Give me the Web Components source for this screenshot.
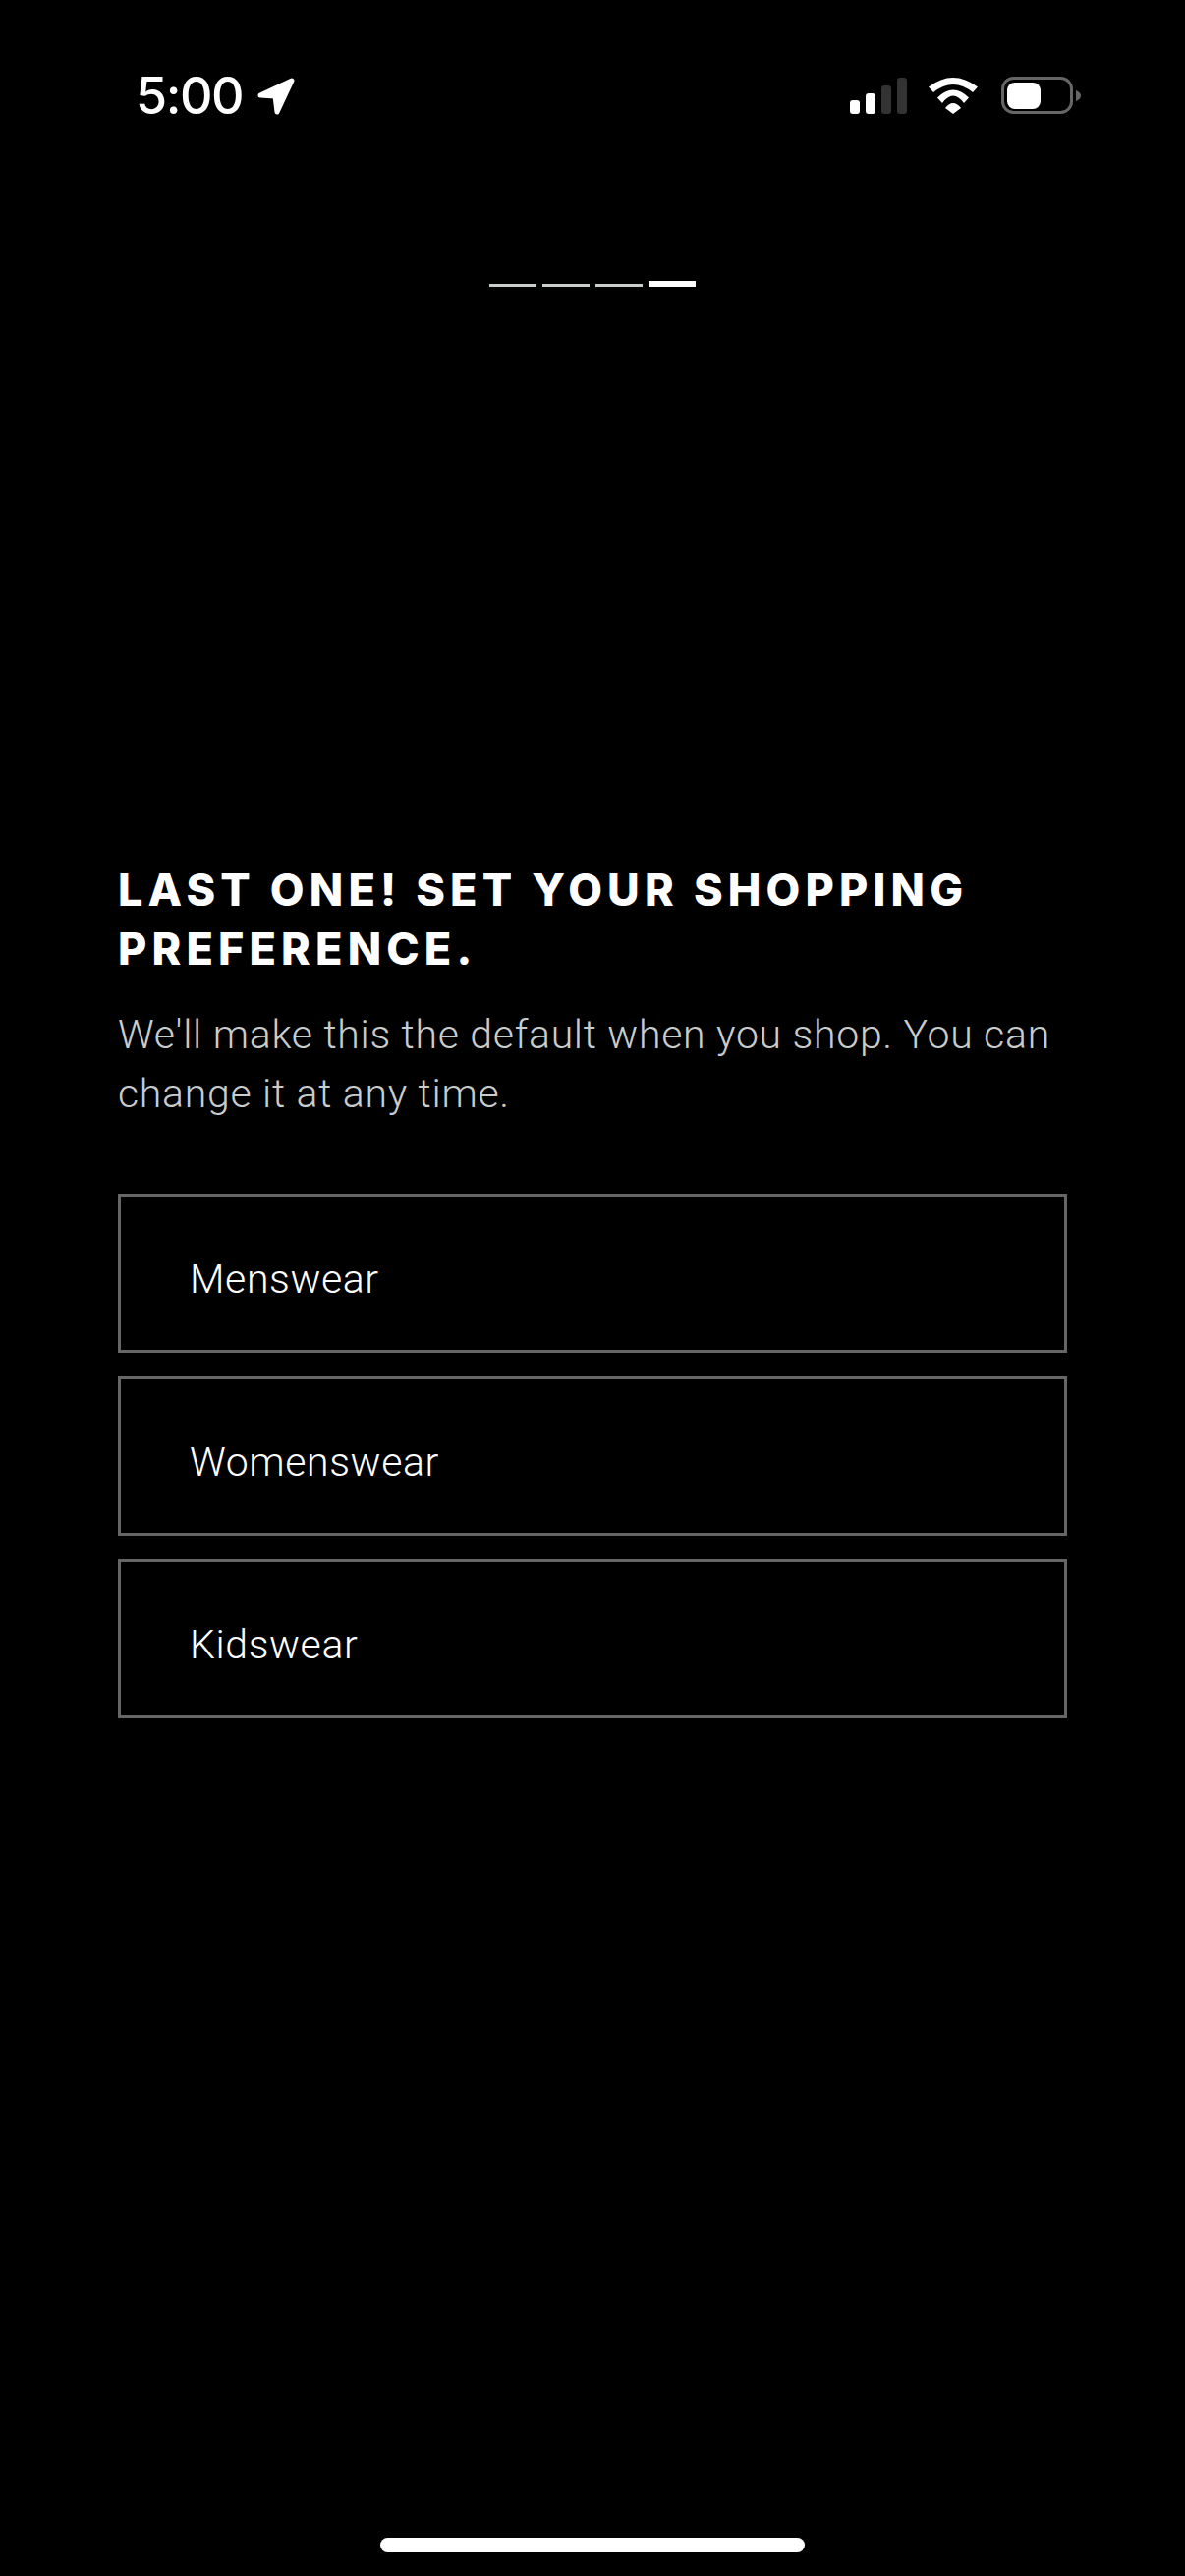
<!DOCTYPE html>
<html>
<head>
<meta charset="utf-8">
<title>Shopping preference</title>
<style>
  html, body { margin: 0; background: #000; }
</style>
</head>
<body>
<pref-screen>
  <status-bar time="5:00"></status-bar>
  <step-progress steps="4" current="4"></step-progress>
  <pref-intro>
    <span slot="title">Last one! Set your shopping preference.</span>
    We'll make this the default when you shop. You can change it at any time.
  </pref-intro>
  <pref-options>
    <pref-option>Menswear</pref-option>
    <pref-option>Womenswear</pref-option>
    <pref-option>Kidswear</pref-option>
  </pref-options>
  <home-bar></home-bar>
</pref-screen>

<script>
(function () {
    class PrefScreen extends HTMLElement {
        constructor() {
            super();
            this.attachShadow({ mode: 'open' }).innerHTML = `
              <style>
                :host {
                    display: flex;
                    flex-direction: column;
                    box-sizing: border-box;
                    width: 1206px;
                    height: 2622px;
                    background: #000;
                    color: #fff;
                    overflow: hidden;
                }
              </style>
              <slot></slot>`;
        }
    }

    class StatusBar extends HTMLElement {
        constructor() {
            super();
            this.attachShadow({ mode: 'open' }).innerHTML = `
              <style>
                :host {
                    display: flex;
                    align-items: flex-start;
                    justify-content: space-between;
                    box-sizing: border-box;
                    height: 118px;
                    padding: 78px 106px 0 138px;
                }
                .left, .right { display: flex; align-items: flex-start; }
                .time {
                    font: 500 52px/40px Inter, sans-serif;
                    width: 109px;
                    letter-spacing: -1.5px;
                }
                .arrow { margin: 1px 0 0 15px; }
                .signal { display: flex; align-items: flex-end; gap: 6px; height: 38px; margin-right: 22px; }
                .signal i { display: block; width: 10px; border-radius: 3px; background: #fff; }
                .signal i.off { background: #333; }
                .wifi { margin: 1px 24px 0 0; }
              </style>
              <div class="left">
                <div class="time"></div>
                <svg class="arrow" width="38" height="38" viewBox="0 0 38 38">
                  <path d="M3 18 L35 3 L20 35 L18 19 Z" fill="#fff" stroke="#fff" stroke-width="5" stroke-linejoin="round"/>
                </svg>
              </div>
              <div class="right">
                <div class="signal">
                  <i style="height:14px"></i>
                  <i style="height:21px"></i>
                  <i class="off" style="height:29px"></i>
                  <i class="off" style="height:37px"></i>
                </div>
                <svg class="wifi" width="50" height="37" viewBox="0 0 50 37" fill="#fff">
                  <path d="M0 9.5 Q25 -9.5 50 9.5 L45 15 Q25 -1 5 15 Z"/>
                  <path d="M9 20.5 Q25 4.5 41 20.5 L36 26 Q25 11 14 26 Z"/>
                  <path d="M17 31 Q25 21 33 31 L25 37 Z"/>
                </svg>
                <svg width="81" height="38" viewBox="0 0 81 38">
                  <rect x="1.5" y="1.5" width="70" height="35" rx="11" fill="none" stroke="#666" stroke-width="3"/>
                  <rect x="6" y="6" width="34" height="27" rx="8" fill="#fff"/>
                  <path d="M76 14 C79 15 81 17 81 19.500 C81 22 79 24 76 25 Z" fill="#666"/>
                </svg>
              </div>`;
            this.shadowRoot.querySelector('.time').textContent = this.getAttribute('time');
        }
    }

    class StepProgress extends HTMLElement {
        constructor() {
            super();
            let steps = Number(this.getAttribute('steps'));
            let current = Number(this.getAttribute('current'));
            let html = '';
            for (let i = 1; i <= steps; i++) {
                html += '<i class="' + (i === current ? 'on' : '') + '"></i>';
            }
            this.attachShadow({ mode: 'open' }).innerHTML = `
              <style>
                :host {
                    display: flex;
                    justify-content: center;
                    align-items: flex-end;
                    gap: 6px;
                    height: 6px;
                    margin-top: 168px;
                }
                i { display: block; width: 48px; height: 3px; background: #c8cccc; }
                i.on { height: 6px; background: #fff; }
              </style>` + html;
        }
    }

    class PrefIntro extends HTMLElement {
        constructor() {
            super();
            this.attachShadow({ mode: 'open' }).innerHTML = `
              <style>
                :host {
                    display: block;
                    margin-top: 584px;
                    padding: 0 120px;
                }
                h1 {
                    margin: 0;
                    font: 800 45px/60px Inter, sans-serif;
                    letter-spacing: 5.15px;
                    text-transform: uppercase;
                    color: #fff;
                }
                p {
                    margin: 27px 0 0;
                    font: 300 41px/60px Roboto, sans-serif;
                    letter-spacing: 0.7px;
                    color: #c8cccc;
                }
              </style>
              <h1><slot name="title"></slot></h1>
              <p><slot></slot></p>`;
        }
    }

    class PrefOptions extends HTMLElement {
        constructor() {
            super();
            this.attachShadow({ mode: 'open' }).innerHTML = `
              <style>
                :host {
                    display: flex;
                    flex-direction: column;
                    gap: 24px;
                    margin-top: 72px;
                    padding: 0 120px;
                }
              </style>
              <slot></slot>`;
        }
    }

    class PrefOption extends HTMLElement {
        constructor() {
            super();
            this.attachShadow({ mode: 'open' }).innerHTML = `
              <style>
                :host {
                    display: flex;
                    align-items: center;
                    box-sizing: border-box;
                    height: 162px;
                    padding: 11px 0 0 70px;
                    border: 3px solid #666;
                    font: 300 41px/60px Roboto, sans-serif;
                    letter-spacing: 0.6px;
                    color: #fff;
                }
              </style>
              <slot></slot>`;
        }
    }

    class HomeBar extends HTMLElement {
        constructor() {
            super();
            this.attachShadow({ mode: 'open' }).innerHTML = `
              <style>
                :host {
                    display: block;
                    width: 432px;
                    height: 15px;
                    margin: auto auto 24px;
                    border-radius: 8px;
                    background: #fff;
                }
              </style>`;
        }
    }

    customElements.define('pref-screen', PrefScreen);
    customElements.define('status-bar', StatusBar);
    customElements.define('step-progress', StepProgress);
    customElements.define('pref-intro', PrefIntro);
    customElements.define('pref-options', PrefOptions);
    customElements.define('pref-option', PrefOption);
    customElements.define('home-bar', HomeBar);
})();
</script>
</body>
</html>
